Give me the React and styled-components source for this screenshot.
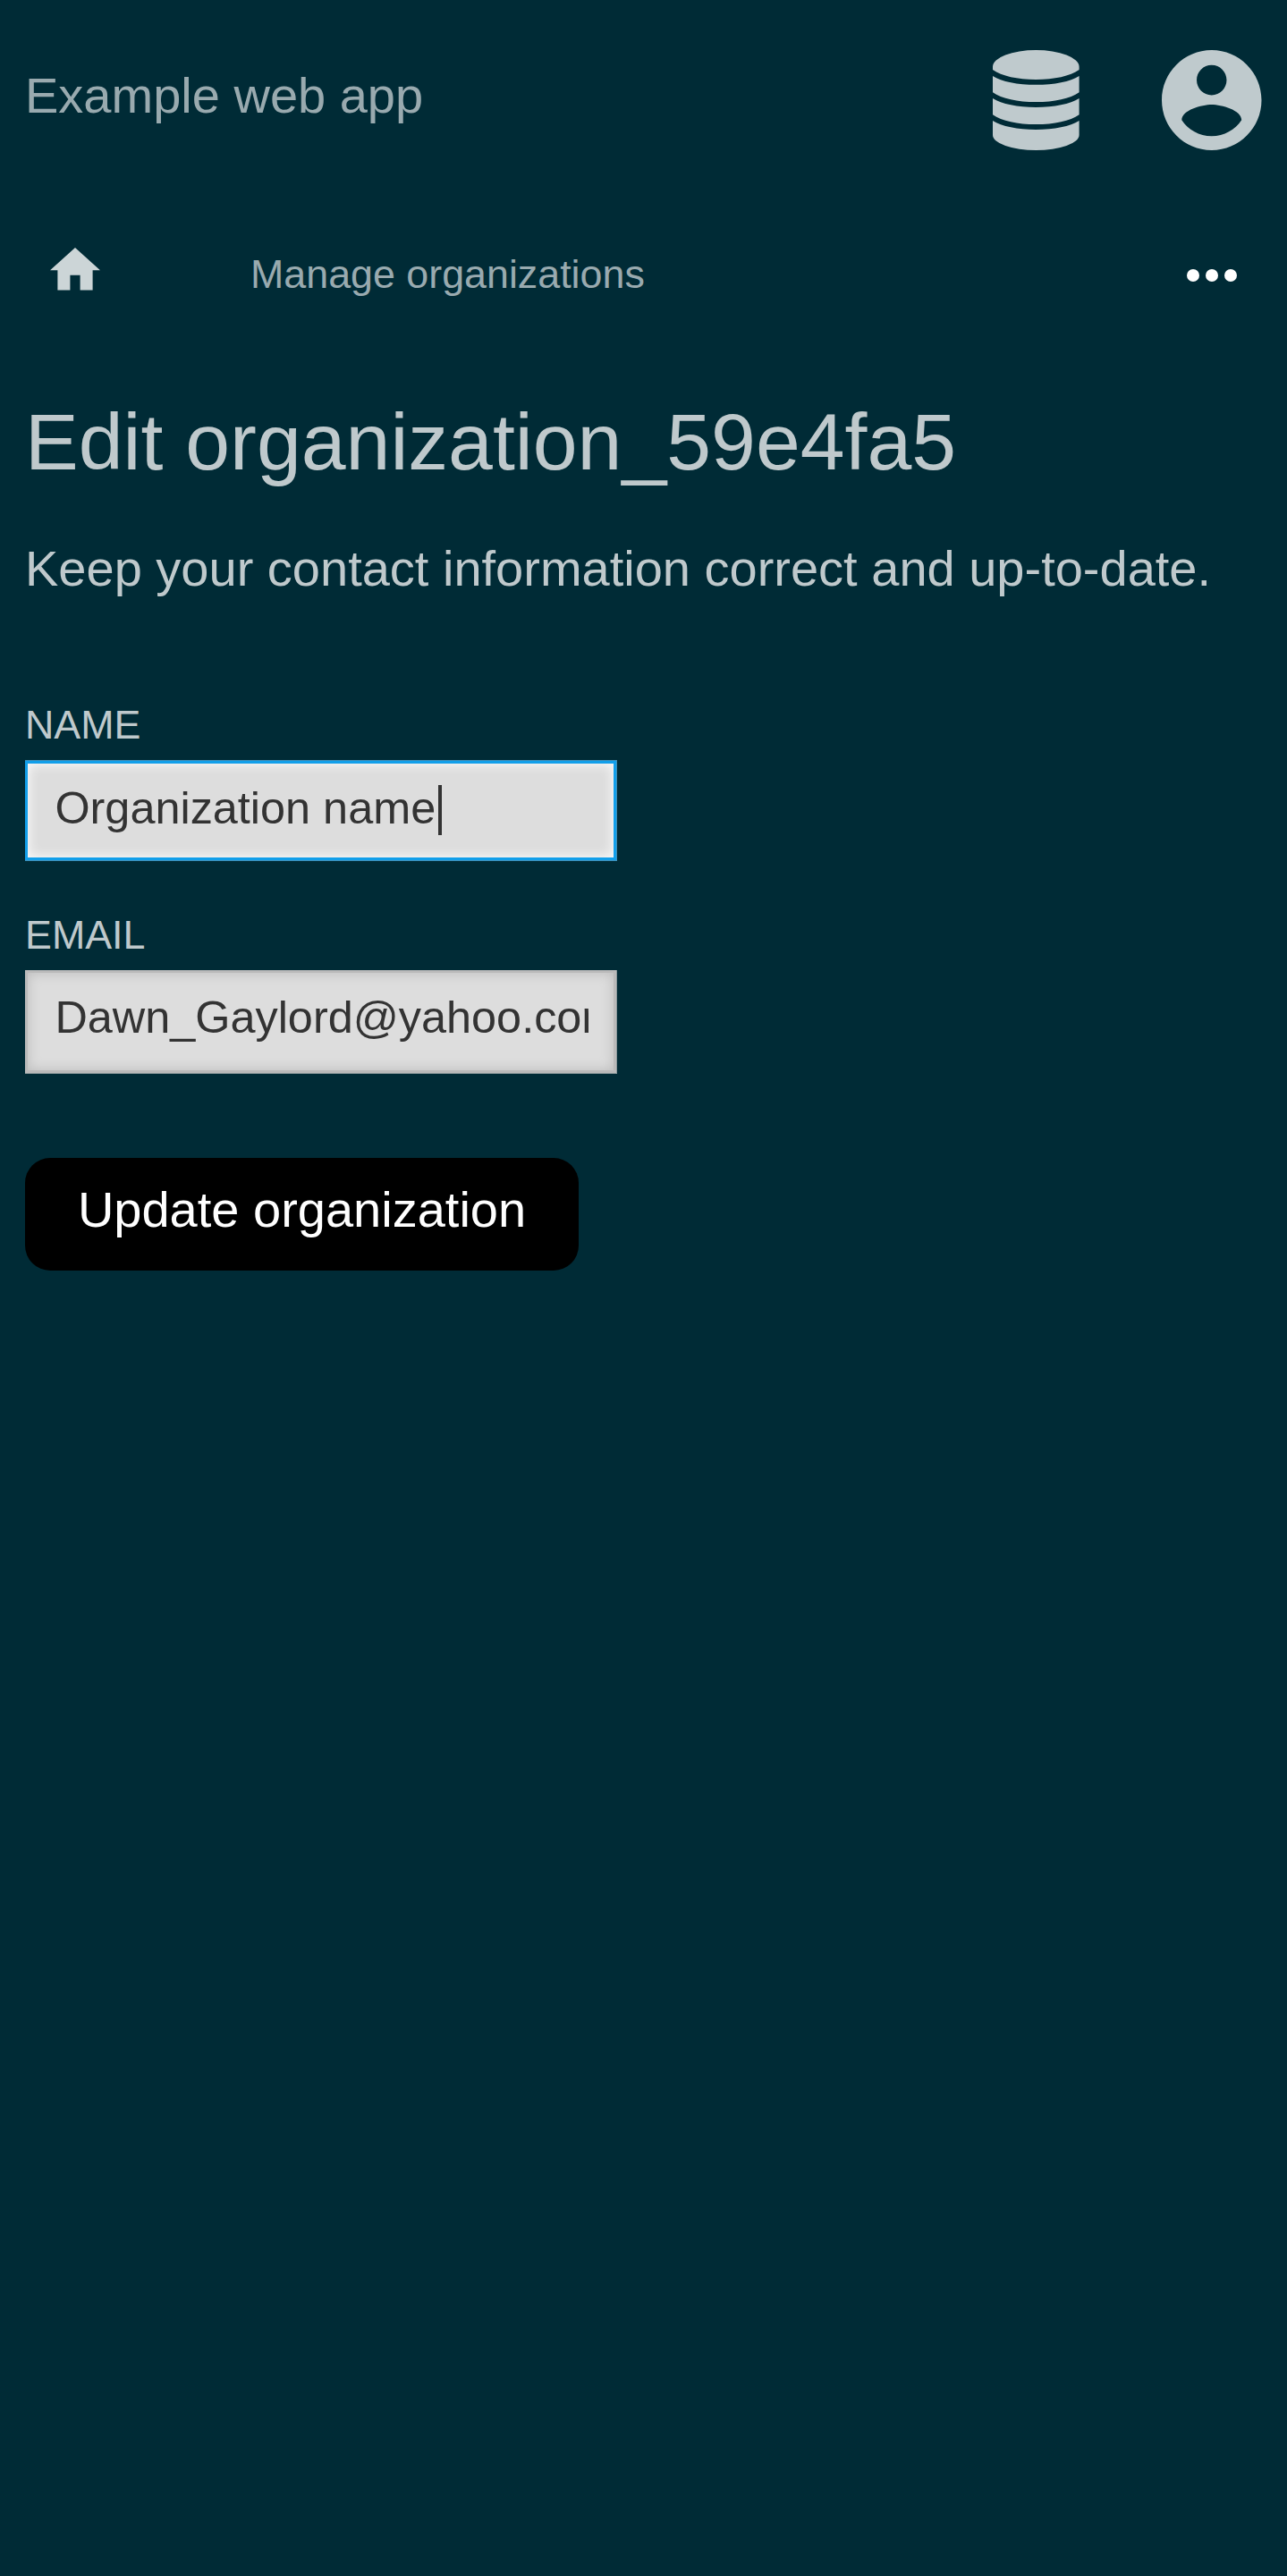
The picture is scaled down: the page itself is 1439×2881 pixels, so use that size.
import React from "react";
import styled, { createGlobalStyle } from "styled-components";

const GlobalStyle = createGlobalStyle`
  html { background: #002b36; }
  body {
    margin: 0;
    background: #002b36;
    color: #bfc9cc;
    font-family: "Liberation Sans", Arial, sans-serif;
    font-size: 56px;
  }
  *, *::before, *::after { box-sizing: border-box; }
`;

const Page = styled.div`
  min-height: 2881px;
  display: flex;
  flex-direction: column;
  background: #002b36;
`;

const Header = styled.header`
  display: flex;
  align-items: flex-start;
  justify-content: space-between;
  height: 224px;
  padding: 0 28.5px 0 28px;
`;

const Brand = styled.a`
  margin-top: 75px;
  line-height: 64px;
  color: #99aaaf;
`;

const HeaderActions = styled.div`
  display: flex;
  margin-top: 56px;
  gap: 92px;
`;

const Icon = styled.svg`
  display: block;
  flex: none;
  width: ${(p) => p.$width}px;
  height: ${(p) => p.$height}px;
  fill: ${(p) => p.$color || "#bfcacd"};
`;

const Nav = styled.nav`
  display: flex;
  align-items: flex-start;
  height: 168px;
  padding: 0 56px;
`;

const HomeLink = styled.a`
  margin-top: 53px;
`;

const NavLink = styled.a`
  margin: 56px auto 0 168px;
  font-size: 44.8px;
  line-height: 52px;
  color: #99aaaf;
`;

const MenuButton = styled.a`
  margin-top: 77px;
`;

const Main = styled.main`
  padding: 50px 28px 0;
`;

const Title = styled.h1`
  margin: 0;
  font-size: 89.6px;
  font-weight: 400;
  line-height: 104px;
`;

const Lead = styled.p`
  margin: 58px 0 0;
  line-height: 64px;
`;

const Form = styled.form`
  display: flex;
  flex-direction: column;
  align-items: flex-start;
  margin-top: 116px;
`;

const Field = styled.label`
  display: flex;
  flex-direction: column;
  height: 235px;
`;

const Label = styled.span`
  font-size: 44.8px;
  line-height: 52px;
  text-transform: uppercase;
`;

const InputBox = styled.span`
  display: flex;
  align-items: flex-start;
  width: 661px;
  height: ${(p) => (p.$focused ? 111 : 115)}px;
  margin-top: ${(p) => (p.$focused ? 15 : 14)}px;
  padding: 21px 28px 0 30.4px;
  border: 3px solid ${(p) => (p.$focused ? "#129fea" : "#bababa")};
  background: #ddd;
  box-shadow: ${(p) =>
    p.$focused
      ? "inset 0 0 14px #fff, 1px -1px 0 #3f8fb8, 1px 1px 0 #3f8fb8, 0 -1px 0 #3f8fb8, 0 1px 0 #3f8fb8"
      : "inset 0 0 14px #bbb, 1px 0 0 #8d9a9d, 1px 1px 0 #8d9a9d, 0 1px 0 #8d9a9d"};
  color: #333;
  font-size: 50.4px;
  line-height: 58px;
`;

const Value = styled.span`
  overflow: hidden;
  white-space: nowrap;
`;

const Caret = styled.span`
  flex: none;
  width: 3.5px;
  height: 56px;
  margin: 3px 0 0 3px;
  background: #333;
`;

const Submit = styled.button`
  width: 619px;
  height: 126px;
  margin-top: 41px;
  padding: 0 0 12px;
  border: 0;
  border-radius: 28px;
  background: #000;
  color: #fff;
  font: inherit;
`;

function DatabaseIcon() {
  return (
    <Icon $width={96.6} $height={112} viewBox="0 0 97 112" preserveAspectRatio="none">
      <path d="M0 18.500A48.500 18.500 0 0 1 97 18.500V22c-10 7-28 11-48.500 11S10 29 0 22z" />
      <path d="M0 28.900c10 6.400 28 9.900 48.500 9.900S87 35.300 97 28.900V47.200c-10 7-28 10.900-48.500 10.900S10 54.200 0 47.200z" />
      <path d="M0 54c10 6.400 28 9.900 48.500 9.900S87 60.400 97 54V72.200c-10 7-28 10.900-48.500 10.900S10 79.200 0 72.200z" />
      <path d="M0 79c10 6.400 28 9.900 48.500 9.900S87 85.400 97 79V95A48.500 17 0 0 1 0 95z" />
    </Icon>
  );
}

export default function App() {
  return (
    <Page>
      <GlobalStyle />
      <Header>
        <Brand>Example web app</Brand>
        <HeaderActions>
          <DatabaseIcon />
          <Icon $width={111.5} $height={112} viewBox="2 2 20 20" preserveAspectRatio="none">
            <path d="M12 2C6.480 2 2 6.480 2 12s4.480 10 10 10 10-4.480 10-10S17.520 2 12 2zm0 3c1.660 0 3 1.340 3 3s-1.340 3-3 3-3-1.340-3-3 1.340-3 3-3zm0 14.200c-2.500 0-4.710-1.280-6-3.220.030-1.990 4-3.080 6-3.080 1.990 0 5.970 1.090 6 3.080-1.290 1.940-3.500 3.220-6 3.220z" />
          </Icon>
        </HeaderActions>
      </Header>
      <Nav>
        <HomeLink>
          <Icon $width={56} $height={47.6} $color="#ccd5d7" viewBox="2 3 20 17">
            <path d="M10 20v-6h4v6h5v-8h3L12 3 2 12h3v8z" />
          </Icon>
        </HomeLink>
        <NavLink>Manage organizations</NavLink>
        <MenuButton>
          <Icon $width={56} $height={14} $color="#fff" viewBox="0 0 56 14">
            <circle cx="7" cy="7" r="7" />
            <circle cx="28" cy="7" r="7" />
            <circle cx="49" cy="7" r="7" />
          </Icon>
        </MenuButton>
      </Nav>
      <Main>
        <Title>Edit organization_59e4fa5</Title>
        <Lead>Keep your contact information correct and up-to-date.</Lead>
        <Form>
          <Field>
            <Label>Name</Label>
            <InputBox $focused>
              <Value>Organization name</Value>
              <Caret />
            </InputBox>
          </Field>
          <Field>
            <Label>Email</Label>
            <InputBox>
              <Value>Dawn_Gaylord@yahoo.com</Value>
            </InputBox>
          </Field>
          <Submit type="button">Update organization</Submit>
        </Form>
      </Main>
    </Page>
  );
}
